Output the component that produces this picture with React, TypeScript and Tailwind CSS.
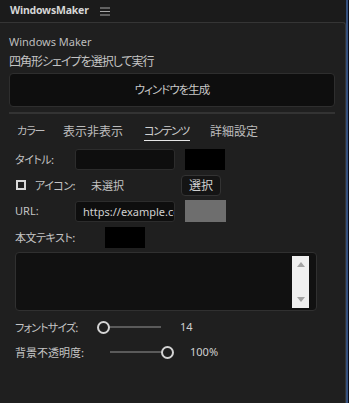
import { useState } from "react"

const jp = "font-['Segoe_UI','Noto_Sans_CJK_JP',sans-serif] [font-feature-settings:'palt']"

function Slider({ value }: { value: number }) {
    // value 0..1
    return (
        <div className="relative w-[64px] h-[14px] flex items-center">
            <div className="absolute h-[2px] bg-[#5a5a5a]" style={{ left: value > 0.5 ? 0 : 12, right: value > 0.5 ? 12 : 0 }} />
            <div
                className="absolute w-[13px] h-[13px] rounded-full border-2 border-[#d4d4d4] bg-[#1f1f1f]"
                style={{ left: `calc(${value * 100}% - ${value * 13}px)` }}
            />
        </div>
    )
}

export default function App() {
    const [tab] = useState("コンテンツ")
    const tabs = [
        { t: "カラー", kana: true },
        { t: "表示非表示", kana: false },
        { t: "コンテンツ", kana: true },
        { t: "詳細設定", kana: false },
    ]

    return (
        <div className={`w-[349px] h-[403px] bg-[#0a0c18] flex text-[11px] text-[#c4c4c4] ${jp}`}>
            <div className="w-[346px] h-full bg-[#1b1b1b] flex flex-col">
                <div className="h-[22px] flex items-center pl-[10px] gap-[11px] shrink-0">
                    <span className="font-bold text-[#d6d6d6] text-[10.5px] font-['Noto_Sans',sans-serif] tracking-[-0.2px]">WindowsMaker</span>
                    <svg width="10" height="9" viewBox="0 0 10 9" className="mt-[1px]">
                        <path d="M0 1h10M0 4.5h10M0 8h10" stroke="#a8a8a8" strokeWidth="1" />
                    </svg>
                </div>
                <div className="flex-1 bg-[#1f1f1f] border-t border-r border-[#353535] rounded-tr-[3px] flex flex-col px-[9px] pt-[11px]">
                    <div className="h-[16px] leading-[16px] text-[11px] text-[#bdbdbd] font-['Noto_Sans',sans-serif]">Windows Maker</div>
                    <div className="h-[16px] leading-[16px] mt-[3px] text-[12px] tracking-[-1px] text-[#c4c4c4]">四角形シェイプを選択して実行</div>
                    <button className="mt-[4px] h-[34px] w-[326px] bg-[#0e0e0e] border border-[#2e2e2e] rounded-[4px] text-[11.5px] tracking-[-1px] text-[#c8c8c8]">
                        ウィンドウを生成
                    </button>
                    <div className="mt-[5px] h-[2px] w-[326px] bg-[#333333]" />

                    <div className="grid grid-cols-[26px_61px_46px_48px] gap-x-[20px] pl-[8px] mt-[8px] h-[20px] items-start">
                        {tabs.map(({ t, kana }) => (
                            <div
                                key={t}
                                className={`overflow-visible whitespace-nowrap h-[19px] leading-[17px] ${kana ? "text-[11px] tracking-[-1px]" : "text-[12px]"} ${t === tab ? "border-b border-[#e6e6e6] text-[#d0d0d0]" : "text-[#bdbdbd]"}`}
                            >
                                {t}
                            </div>
                        ))}
                    </div>

                    <div className="flex items-center mt-[6px] h-[22px] pl-[6px]">
                        <span className="w-[60px] tracking-[-0.5px]">タイトル:</span>
                        <div className="w-[100px] h-[21px] bg-[#0e0e0e] border border-[#2c2c2c] rounded-[3px]" />
                        <div className="ml-[10px] w-[40px] h-[21px] bg-black" />
                    </div>

                    <div className="flex items-center mt-[4px] h-[22px] pl-[7px]">
                        <div className="w-[10px] h-[10px] border-2 border-[#d8d8d8]" />
                        <span className="ml-[9px] w-[56px] tracking-[-0.5px]">アイコン:</span>
                        <span className="w-[90px]">未選択</span>
                        <div className="w-[40px] h-[21px] bg-[#141414] border border-[#333] rounded-[4px] flex items-center justify-center text-[12px] text-[#cfcfcf]">選択</div>
                    </div>

                    <div className="flex items-center mt-[4px] h-[22px] pl-[6px]">
                        <span className="w-[60px] font-['Noto_Sans',sans-serif]">URL:</span>
                        <div className="w-[100px] h-[21px] bg-[#0e0e0e] border border-[#2c2c2c] rounded-[3px] overflow-hidden whitespace-nowrap pl-[7px] leading-[19px] text-[11px] text-[#d0d0d0] font-['Noto_Sans',sans-serif]">https://example.com</div>
                        <div className="ml-[10px] w-[41px] h-[22px] bg-[#6e6e6e]" />
                    </div>

                    <div className="flex items-center mt-[4px] h-[22px] pl-[6px]">
                        <span className="w-[90px] tracking-[-0.5px]">本文テキスト:</span>
                        <div className="w-[40px] h-[21px] bg-black" />
                    </div>

                    <div className="mt-[4px] ml-[6px] w-[302px] h-[59px] bg-[#111111] border border-[#303030] rounded-[4px] flex justify-end items-start pt-[3px] pr-[7px]">
                        <div className="w-[17px] h-[52px] bg-[#efefef] flex flex-col items-center justify-between py-[6px]">
                            <svg width="8" height="5" viewBox="0 0 8 5"><path d="M4 0L8 5H0Z" fill="#a3a3a3" /></svg>
                            <svg width="8" height="5" viewBox="0 0 8 5"><path d="M0 0H8L4 5Z" fill="#a3a3a3" /></svg>
                        </div>
                    </div>

                    <div className="flex items-center mt-[8px] h-[16px] pl-[6px]">
                        <span className="w-[82px] tracking-[-0.8px]">フォントサイズ:</span>
                        <Slider value={0} />
                        <span className="ml-[19px] font-['Noto_Sans',sans-serif] text-[#d0d0d0]">14</span>
                    </div>

                    <div className="flex items-center mt-[9px] h-[16px] pl-[6px]">
                        <span className="w-[95px]">背景不透明度:</span>
                        <Slider value={1} />
                        <span className="ml-[16px] font-['Noto_Sans',sans-serif] text-[#d0d0d0]">100%</span>
                    </div>
                </div>
            </div>
            <div className="w-[2px] h-full bg-[#36517f]" />
        </div>
    )
}
